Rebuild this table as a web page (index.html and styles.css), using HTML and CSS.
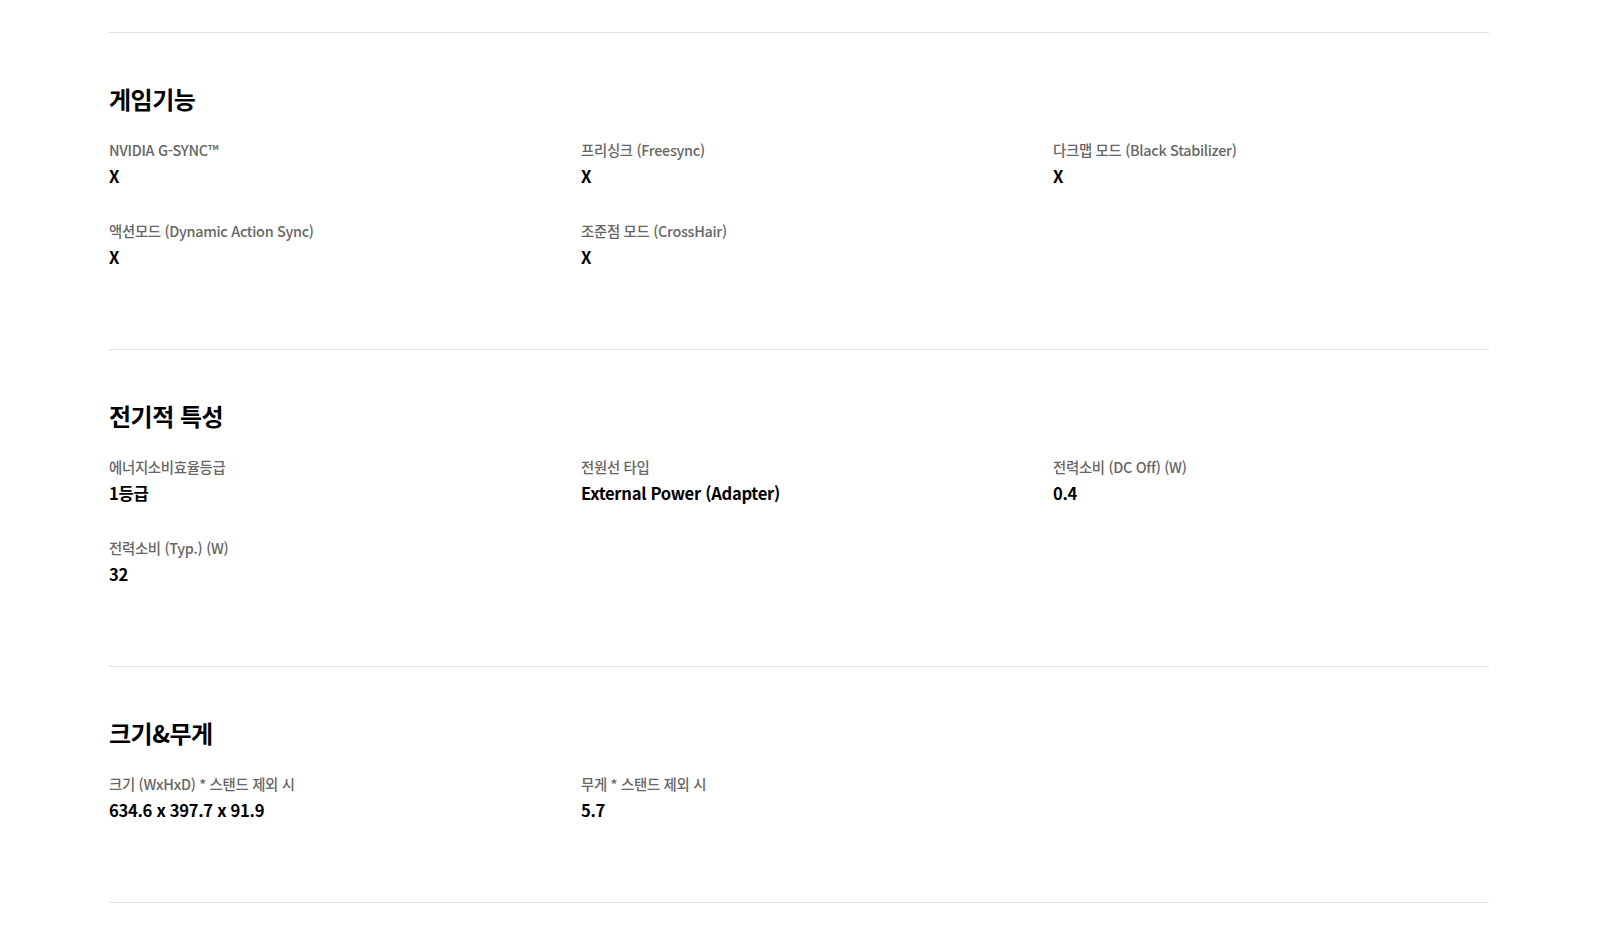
FILE: index.html
```html
<!DOCTYPE html>
<html lang="ko">
<head>
<meta charset="utf-8">
<title>Spec</title>
<link rel="stylesheet" href="styles.css">
</head>
<body>
<div class="specs">
  <section class="spec-section">
    <h2 class="spec-title">게임기능</h2>
    <dl class="spec-grid">
      <div class="spec-item"><dt>NVIDIA G-SYNC™</dt><dd>X</dd></div>
      <div class="spec-item"><dt>프리싱크 (Freesync)</dt><dd>X</dd></div>
      <div class="spec-item"><dt>다크맵 모드 (Black Stabilizer)</dt><dd>X</dd></div>
      <div class="spec-item"><dt>액션모드 (Dynamic Action Sync)</dt><dd>X</dd></div>
      <div class="spec-item"><dt>조준점 모드 (CrossHair)</dt><dd>X</dd></div>
    </dl>
  </section>
  <section class="spec-section">
    <h2 class="spec-title">전기적 특성</h2>
    <dl class="spec-grid">
      <div class="spec-item"><dt>에너지소비효율등급</dt><dd>1등급</dd></div>
      <div class="spec-item"><dt>전원선 타입</dt><dd>External Power (Adapter)</dd></div>
      <div class="spec-item"><dt>전력소비 (DC Off) (W)</dt><dd>0.4</dd></div>
      <div class="spec-item"><dt>전력소비 (Typ.) (W)</dt><dd>32</dd></div>
    </dl>
  </section>
  <section class="spec-section">
    <h2 class="spec-title">크기&amp;무게</h2>
    <dl class="spec-grid">
      <div class="spec-item"><dt>크기 (WxHxD) * 스탠드 제외 시</dt><dd>634.6 x 397.7 x 91.9</dd></div>
      <div class="spec-item"><dt>무게 * 스탠드 제외 시</dt><dd>5.7</dd></div>
    </dl>
  </section>
  <div class="spec-end"></div>
</div>
</body>
</html>
```
FILE: styles.css
```css
html, body {
  margin: 0;
  padding: 0;
  background: #fff;
}
body {
  font-family: "Noto Sans CJK KR", "Noto Sans", sans-serif;
  color: #000;
}
.specs {
  width: 1380px;
  margin: 0 auto;
  padding-top: 32px;
}
.spec-section {
  border-top: 1px solid #e0e0e0;
  padding: 48px 0 80px;
}
.spec-end {
  border-top: 1px solid #e0e0e0;
}
.spec-title {
  margin: 0 0 22px;
  font-size: 24px;
  line-height: 36px;
  font-weight: 700;
  letter-spacing: -0.5px;
}
.spec-grid {
  margin: 0;
  display: grid;
  grid-template-columns: 472px 472px 1fr;
  row-gap: 32px;
}
.spec-item dt {
  font-size: 14.4px;
  line-height: 22px;
  color: #666;
  font-weight: 500;
  letter-spacing: -0.3px;
}
.spec-item dd {
  margin: 3px 0 0;
  font-size: 16.6px;
  line-height: 24px;
  font-weight: 700;
  letter-spacing: -0.3px;
}
```
